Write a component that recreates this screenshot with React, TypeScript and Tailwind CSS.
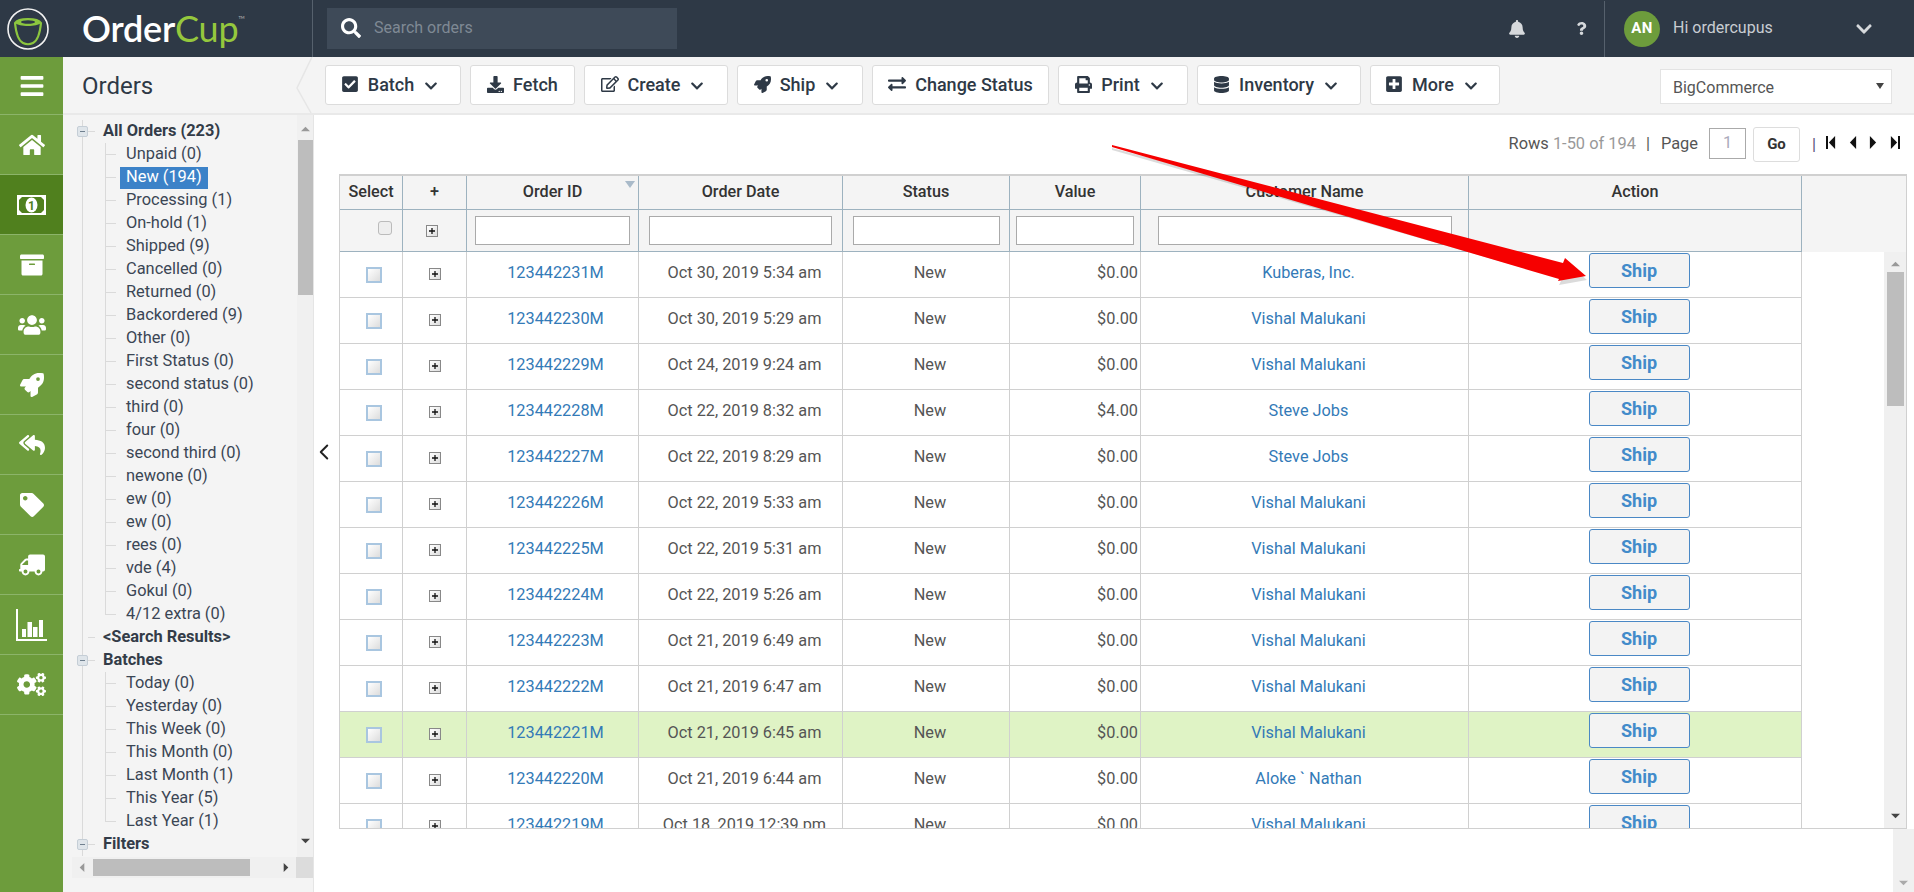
import type { ReactNode } from 'react'
import {
  FaBars, FaHome, FaArchive, FaUsers, FaRocket, FaReplyAll, FaTag, FaTruck, FaCogs,
  FaCheckSquare, FaDownload, FaRegEdit, FaExchangeAlt, FaPrint, FaDatabase, FaPlusSquare, FaBell, FaQuestion,
  FaChevronDown, FaSearch,
} from 'react-icons/fa'
import { ChevronLeft } from 'lucide-react'

function MoneyIcon() {
  return (
    <svg viewBox="0 0 29 20" className="h-[20px] w-[29px]">
      <rect width="29" height="20" fill="#fff" />
      <path d="M5 2H24L27 5V15L24 18H5L2 15V5Z" fill="#50801e" />
      <ellipse cx="14.500" cy="10" rx="6" ry="7.500" fill="#fff" />
      <text x="14.500" y="14.500" textAnchor="middle" fontSize="12" fontWeight="700" fill="#50801e" fontFamily="Roboto, sans-serif">1</text>
    </svg>
  )
}

function ChartIcon() {
  return (
    <svg viewBox="0 0 31 32" className="h-[32px] w-[31px]">
      <path d="M1 0H2V30H31V32H0V0Z" fill="#fff" />
      <rect x="6" y="20" width="4" height="8" fill="#fff" />
      <rect x="11.500" y="13" width="4.500" height="15" fill="#fff" />
      <rect x="17" y="18" width="4.500" height="10" fill="#fff" />
      <rect x="23" y="11" width="4" height="17" fill="#fff" />
    </svg>
  )
}

const railItems = [
  { icon: <FaHome size={26} /> },
  { icon: <MoneyIcon />, active: true },
  { icon: <FaArchive size={24} /> },
  { icon: <FaUsers size={28} /> },
  { icon: <FaRocket size={24} /> },
  { icon: <FaReplyAll size={26} /> },
  { icon: <FaTag size={24} /> },
  { icon: <FaTruck size={26} className="-scale-x-100" /> },
  { icon: <ChartIcon /> },
  { icon: <FaCogs size={29} /> },
]

const toolbar = [
  { label: 'Batch', icon: <FaCheckSquare size={18} />, w: 'w-[136px]', caret: true },
  { label: 'Fetch', icon: <FaDownload size={17} />, w: 'w-[105px]' },
  { label: 'Create', icon: <FaRegEdit size={18} />, w: 'w-[144px]', caret: true },
  { label: 'Ship', icon: <FaRocket size={17} />, w: 'w-[126px]', caret: true },
  { label: 'Change Status', icon: <FaExchangeAlt size={18} />, w: 'w-[177px]' },
  { label: 'Print', icon: <FaPrint size={17} />, w: 'w-[130px]', caret: true },
  { label: 'Inventory', icon: <FaDatabase size={17} />, w: 'w-[164px]', caret: true },
  { label: 'More', icon: <FaPlusSquare size={18} />, w: 'w-[130px]', caret: true },
]

type TreeRow = { label: string; kind: 'parent' | 'child' | 'plain'; selected?: boolean; last?: boolean }

const child = (label: string, extra: Partial<TreeRow> = {}): TreeRow => ({ label, kind: 'child', ...extra })

const tree: TreeRow[] = [
  { label: 'All Orders (223)', kind: 'parent' },
  child('Unpaid (0)'),
  child('New (194)', { selected: true }),
  child('Processing (1)'),
  child('On-hold (1)'),
  child('Shipped (9)'),
  child('Cancelled (0)'),
  child('Returned (0)'),
  child('Backordered (9)'),
  child('Other (0)'),
  child('First Status (0)'),
  child('second status (0)'),
  child('third (0)'),
  child('four (0)'),
  child('second third (0)'),
  child('newone (0)'),
  child('ew (0)'),
  child('ew (0)'),
  child('rees (0)'),
  child('vde (4)'),
  child('Gokul (0)'),
  child('4/12 extra (0)', { last: true }),
  { label: '<Search Results>', kind: 'plain' },
  { label: 'Batches', kind: 'parent' },
  child('Today (0)'),
  child('Yesterday (0)'),
  child('This Week (0)'),
  child('This Month (0)'),
  child('Last Month (1)'),
  child('This Year (5)'),
  child('Last Year (1)', { last: true }),
  { label: 'Filters', kind: 'parent' },
]

const orders = [
  ['123442231M', 'Oct 30, 2019 5:34 am', '$0.00', 'Kuberas, Inc.'],
  ['123442230M', 'Oct 30, 2019 5:29 am', '$0.00', 'Vishal Malukani'],
  ['123442229M', 'Oct 24, 2019 9:24 am', '$0.00', 'Vishal Malukani'],
  ['123442228M', 'Oct 22, 2019 8:32 am', '$4.00', 'Steve Jobs'],
  ['123442227M', 'Oct 22, 2019 8:29 am', '$0.00', 'Steve Jobs'],
  ['123442226M', 'Oct 22, 2019 5:33 am', '$0.00', 'Vishal Malukani'],
  ['123442225M', 'Oct 22, 2019 5:31 am', '$0.00', 'Vishal Malukani'],
  ['123442224M', 'Oct 22, 2019 5:26 am', '$0.00', 'Vishal Malukani'],
  ['123442223M', 'Oct 21, 2019 6:49 am', '$0.00', 'Vishal Malukani'],
  ['123442222M', 'Oct 21, 2019 6:47 am', '$0.00', 'Vishal Malukani'],
  ['123442221M', 'Oct 21, 2019 6:45 am', '$0.00', 'Vishal Malukani'],
  ['123442220M', 'Oct 21, 2019 6:44 am', '$0.00', 'Aloke ` Nathan'],
  ['123442219M', 'Oct 18, 2019 12:39 pm', '$0.00', 'Vishal Malukani'],
]

function Triangle({ dir, className }: { dir: 'up' | 'down' | 'left' | 'right'; className: string }) {
  const points = { up: '0,8 6,1 12,8', down: '0,1 12,1 6,8', left: '8,0 8,12 1,6', right: '1,0 1,12 8,6' }[dir]
  return (
    <svg viewBox={dir === 'up' || dir === 'down' ? '0 0 12 9' : '0 0 9 12'} preserveAspectRatio="none" className={className}>
      <polygon points={points} fill="currentColor" />
    </svg>
  )
}

function Logo() {
  return (
    <div className="flex w-[313px] shrink-0 items-center border-r border-[#56616d] h-full">
      <svg viewBox="0 0 42 42" className="ml-[7px] h-[42px] w-[42px]">
        <circle cx="21" cy="21" r="20" fill="none" stroke="#f2f2f2" strokeWidth="1.6" />
        <path d="M8 15 C10 12 14 11 21 11 C28 11 32 12 34 15 C33 25 30 33 26 35 C23 36.500 19 36.500 16 35 C12 33 9 25 8 15 Z" fill="none" stroke="#8cc63f" strokeWidth="2.2" />
        <path d="M8 15 C12 19 30 19 34 15 C32 12 27 11 21 11 C15 11 10 12 8 15 Z" fill="#8cc63f" />
        <ellipse cx="21" cy="14" rx="7" ry="1.800" fill="#2e3946" />
      </svg>
      <div className="ml-[33px] flex font-['Lato',sans-serif] text-[36px] font-semibold leading-none tracking-[-0.2px] mt-[-2px]">
        <span className="text-white">Order</span>
        <span className="font-normal text-[#95c83d]">Cup</span>
        <span className="mt-[6px] text-[4px] text-[#aaa]">TM</span>
      </div>
    </div>
  )
}

function Header() {
  return (
    <div className="flex h-[57px] shrink-0 items-center bg-[#2e3946]">
      <Logo />
      <div className="ml-[14px] flex h-[41px] w-[350px] items-center bg-[#3e4a58] pb-[2px] pl-[14px] text-[16px] text-[#7f8994]">
        <FaSearch size={20} className="text-white" />
        <span className="ml-[13px]">Search orders</span>
      </div>
      <FaBell size={18} className="ml-auto text-[#d6d9dc]" />
      <FaQuestion size={13} className="ml-[49px] text-[#d6d9dc]" />
      <div className="ml-[16px] flex h-[56px] w-[310px] items-center border-l border-[#56616d] pl-[19px]">
        <div className="flex h-[36px] w-[36px] items-center justify-center rounded-full bg-[#6d9c3c] text-[15px] font-bold tracking-[0.5px] text-white">AN</div>
        <span className="ml-[13px] pb-[1px] text-[16px] text-[#c9cdd2]">Hi ordercupus</span>
        <FaChevronDown size={18} className="ml-[82px] text-[#d6d9dc]" />
      </div>
    </div>
  )
}

function Rail() {
  return (
    <div className="flex w-[63px] shrink-0 flex-col bg-[#6d9c3c] text-white">
      <div className="flex h-[58px] items-center justify-center border-b border-[#8cb46a]">
        <FaBars size={26} />
      </div>
      {railItems.map((item, i) => (
        <div key={i} className={`flex h-[60px] items-center justify-center border-b border-[#8cb46a] ${item.active ? 'bg-[#50801e]' : ''}`}>
          {item.icon}
        </div>
      ))}
    </div>
  )
}

function Toolbar() {
  return (
    <div className="flex h-[58px] shrink-0 border-b-2 border-[#e9e9e9] bg-[#f4f4f4]">
      <div className="relative flex w-[250px] items-center pl-[19px] pt-[2px] text-[24px] text-[#2e3946]">
        Orders
        <svg viewBox="0 0 17 57" className="absolute right-0 top-0 h-[57px] w-[17px]">
          <path d="M16 0 L1 31 L15 56" fill="none" stroke="#e6e6e6" strokeWidth="1.500" />
        </svg>
      </div>
      <div className="ml-[12px] flex gap-[9px] pt-[8px]">
        {toolbar.map(b => (
          <div key={b.label} className={`flex h-[40px] items-center justify-center gap-[9px] rounded-[3px] border border-[#dcdcdc] bg-white pb-[2px] text-[18px] font-medium text-[#2e3946] ${b.caret ? 'pr-[7px]' : ''} ${b.w}`}>
            {b.icon}
            <span>{b.label}</span>
            {b.caret && <FaChevronDown size={14} className="ml-[1px] mt-[3px]" />}
          </div>
        ))}
      </div>
      <div className="ml-[160px] mt-[12px] flex h-[35px] w-[232px] items-center justify-between border border-[#e3e3e3] bg-white pl-[12px] pr-[7px] pt-[2px] text-[16px] text-[#555]">
        BigCommerce
        <Triangle dir="down" className="mb-[4px] h-[8px] w-[8px] text-[#444]" />
      </div>
    </div>
  )
}

function TreeLine({ row }: { row: TreeRow }) {
  return (
    <div className="flex h-[23px] items-center whitespace-nowrap text-[16.400px] text-[#3b4654]">
      <div className={`relative ml-[19px] h-full shrink-0 border-l border-[#dadada] ${row.kind === 'child' ? 'w-[23px]' : 'w-[21px]'}`}>
        {row.kind === 'parent' && <div className="absolute left-[-6px] top-[6px] flex h-[11px] w-[11px] items-center justify-center rounded-[2px] border border-[#c5ced6] bg-[#dfe5ea]"><div className="h-px w-[5px] bg-[#70808f]" /></div>}
        {row.kind !== 'child' && <div className="absolute left-[5px] top-[11px] h-px w-[7px] bg-[#dadada]" />}
      </div>
      {row.kind === 'child' ? (
        <>
          <div className="relative h-full w-[15px] shrink-0">
            <div className={`absolute left-0 top-0 w-px bg-[#dadada] ${row.last ? 'h-[12px]' : 'h-full'}`} />
            <div className="absolute left-0 top-[11px] h-px w-[11px] bg-[#dadada]" />
          </div>
          <span className={`flex h-[22px] items-center px-[6px] ${row.selected ? 'bg-[#3c82c8] text-white' : ''}`}>{row.label}</span>
        </>
      ) : (
        <span className="font-bold text-[#333c48]">{row.label}</span>
      )}
    </div>
  )
}

function TreePanel() {
  return (
    <div className="flex w-[251px] shrink-0 flex-col border-r border-[#e5e5e5] bg-[#f4f4f4]">
      <div className="flex h-[742px] overflow-hidden">
        <div className="h-full w-[234px] overflow-hidden pt-[5px]">
          {tree.map((row, i) => <TreeLine key={i} row={row} />)}
        </div>
        <div className="flex w-[16px] shrink-0 flex-col items-center bg-[#f0f0f0] pt-[11px] text-[#999]">
          <Triangle dir="up" className="h-[6px] w-[9px]" />
          <div className="mt-[8px] h-[155px] w-[15px] bg-[#bdbdbd]" />
          <Triangle dir="down" className="mt-[543px] h-[6px] w-[9px] text-[#444]" />
        </div>
      </div>
      <div className="flex h-[21px]">
        <div className="ml-[9px] flex w-[224px] items-center bg-[#f0f0f0] text-[#999]">
          <Triangle dir="left" className="ml-[7px] h-[9px] w-[6px]" />
          <div className="ml-[8px] h-[17px] w-[157px] bg-[#bdbdbd]" />
          <Triangle dir="right" className="ml-[33px] h-[9px] w-[6px] text-[#444]" />
        </div>
        <div className="w-[17px] bg-[#dcdcdc]" />
      </div>
    </div>
  )
}

const cols = ['w-[63px]', 'w-[64px]', 'w-[172px]', 'w-[204px]', 'w-[167px]', 'w-[131px]', 'w-[328px]', 'w-[333px]']

function HeadCell({ i, children }: { i: number; children?: ReactNode }) {
  return <div className={`relative flex h-full shrink-0 items-center justify-center border-r border-[#9db2bf] ${cols[i]}`}>{children}</div>
}

function ExpandBox({ className = '' }: { className?: string }) {
  return (
    <div className={`flex h-[12px] w-[12px] items-center justify-center border border-[#888] bg-gradient-to-br from-white to-[#ddd] text-[#111] ${className}`}>
      <svg viewBox="0 0 8 8" className="h-[8px] w-[8px]"><path d="M4 1v6M1 4h6" stroke="currentColor" strokeWidth="1.300" /></svg>
    </div>
  )
}

function FilterInput({ w }: { w: string }) {
  return <input className={`h-[29px] border border-[#aaa] bg-white ${w}`} />
}

function OrderRow({ o, green }: { o: string[]; green: boolean }) {
  const cell = 'flex h-full shrink-0 items-center justify-center border-r border-[#d0d0d0]'
  return (
    <div className={`flex h-[46px] w-[1462px] shrink-0 border-b border-[#d0d0d0] text-[16.300px] text-[#555] ${green ? 'bg-[#dff3c5]' : ''}`}>
      <div className={`${cell} ${cols[0]}`}>
        <div className="mt-[1px] ml-[6px] h-[16px] w-[16px] border-2 border-[#a9c6e0] bg-gradient-to-br from-white to-[#ddd]" />
      </div>
      <div className={`${cell} ${cols[1]}`}><ExpandBox className="mb-[1px] ml-[1px]" /></div>
      <div className={`${cell} ${cols[2]} pb-[3px] pl-[6px] text-[#337ab7]`}>{o[0]}</div>
      <div className={`${cell} ${cols[3]} pb-[3px] pl-[8px]`}>{o[1]}</div>
      <div className={`${cell} ${cols[4]} pb-[3px] pl-[8px]`}>New</div>
      <div className={`${cell} ${cols[5]} justify-end pb-[3px] pr-[2px]`}>{o[2]}</div>
      <div className={`${cell} ${cols[6]} pb-[3px] pl-[8px] text-[#337ab7]`}>{o[3]}</div>
      <div className={`${cols[7]} flex h-full shrink-0 justify-center border-r border-[#d0d0d0] pl-[8px] pt-px`}>
        <div className="flex h-[35px] w-[101px] items-center justify-center rounded-[3px] border border-[#4a88c5] bg-[#f3f3f3] text-[18px] font-bold text-[#428bca]">Ship</div>
      </div>
    </div>
  )
}

function OrdersTable() {
  return (
    <div className="flex h-[655px] w-[1568px] flex-col overflow-hidden border border-t-2 border-[#d0d0d0]">
      <div className="flex shrink-0 flex-col bg-[#f4f4f4] text-[16.200px] font-medium text-[#333]">
        <div className="flex h-[34px] w-[1462px] border-b border-[#9db2bf]">
          <HeadCell i={0}>Select</HeadCell>
          <HeadCell i={1}>+</HeadCell>
          <HeadCell i={2}>
            Order ID
            <Triangle dir="down" className="absolute right-[3px] top-[4px] h-[9px] w-[10px] text-[#a9bac9]" />
          </HeadCell>
          <HeadCell i={3}>Order Date</HeadCell>
          <HeadCell i={4}>Status</HeadCell>
          <HeadCell i={5}>Value</HeadCell>
          <HeadCell i={6}>Customer Name</HeadCell>
          <HeadCell i={7}>Action</HeadCell>
        </div>
        <div className="flex h-[42px] w-[1462px] border-b border-[#9db2bf]">
          <HeadCell i={0}><div className="mb-[6px] ml-[27px] h-[14px] w-[14px] rounded-[3px] border border-[#bbb] bg-[#eee]" /></HeadCell>
          <HeadCell i={1}><ExpandBox className="ml-[-5px] mt-[1px]" /></HeadCell>
          <HeadCell i={2}><FilterInput w="w-[155px]" /></HeadCell>
          <HeadCell i={3}><FilterInput w="w-[183px]" /></HeadCell>
          <HeadCell i={4}><FilterInput w="w-[147px]" /></HeadCell>
          <HeadCell i={5}><FilterInput w="w-[118px]" /></HeadCell>
          <HeadCell i={6}><FilterInput w="w-[294px]" /></HeadCell>
          <HeadCell i={7} />
        </div>
      </div>
      <div className="flex min-h-0 flex-1">
        <div className="flex min-w-0 flex-1 flex-col overflow-hidden">
          {orders.map((o, i) => <OrderRow key={o[0]} o={o} green={i === 10} />)}
        </div>
        <div className="flex w-[22px] shrink-0 flex-col items-center bg-[#f0f0f0] pt-[9px] text-[#999]">
          <Triangle dir="up" className="h-[6px] w-[9px]" />
          <div className="mt-[5px] h-[134px] w-[17px] bg-[#bdbdbd]" />
          <Triangle dir="down" className="mt-[407px] h-[6px] w-[9px] text-[#444]" />
        </div>
      </div>
    </div>
  )
}

function Pager() {
  return (
    <div className="flex h-[59px] w-[1568px] items-start justify-end pt-[12px] text-[16.400px] text-[#555]">
      <div className="mt-[5px]">Rows <span className="text-[#999]">1-50 of 194</span></div>
      <div className="ml-[10px] mt-[5px]">|</div>
      <div className="ml-[11px] mt-[5px]">Page</div>
      <div className="ml-[11px] mt-px flex h-[31px] w-[37px] items-center justify-center border border-[#aaa] text-[#aab]">1</div>
      <div className="ml-[7px] flex h-[35px] w-[47px] items-center justify-center rounded-[3px] border border-[#ddd] text-[15px] font-bold text-[#333]">Go</div>
      <div className="ml-[12px] mt-[6px] text-[#5a4a7a]">|</div>
      <div className="ml-[10px] mr-[7px] mt-[9px] flex items-center text-[#111]">
        <div className="h-[13px] w-[2px] bg-current" />
        <Triangle dir="left" className="h-[13px] w-[8px]" />
        <Triangle dir="left" className="ml-[13px] h-[13px] w-[8px]" />
        <Triangle dir="right" className="ml-[12px] h-[13px] w-[8px]" />
        <Triangle dir="right" className="ml-[13px] h-[13px] w-[8px]" />
        <div className="h-[13px] w-[2px] bg-current" />
      </div>
    </div>
  )
}

function Arrow() {
  return (
    <svg viewBox="0 0 1914 892" className="pointer-events-none absolute inset-0 h-[892px] w-[1914px]">
      <polygon points="1112,148 1563,267 1566,262 1587,280 1559,285 1562,279 1112,150" fill="#000" opacity="0.14" />
      <polygon points="1112,145 1563,263 1565,258 1586,276 1558,281 1559,279 1112,147" fill="#f60000" />
    </svg>
  )
}

export default function App() {
  return (
    <div className="relative flex h-[892px] w-[1914px] flex-col overflow-hidden bg-white font-['Roboto',sans-serif]">
      <Header />
      <div className="flex min-h-0 flex-1">
        <Rail />
        <div className="flex min-w-0 flex-1 flex-col">
          <Toolbar />
          <div className="flex min-h-0 flex-1">
            <TreePanel />
            <div className="w-[25px] shrink-0 pt-[324px] text-[#222]">
              <ChevronLeft size={26} strokeWidth={1.8} className="ml-[-3px]" />
            </div>
            <div className="flex w-[1575px] flex-col">
              <Pager />
              <OrdersTable />
              <div className="flex justify-end">
                <div className="flex h-[63px] w-[21px] items-end justify-center bg-[#f0f0f0] pb-[6px] text-[#aaa]">
                  <Triangle dir="down" className="h-[6px] w-[9px]" />
                </div>
              </div>
            </div>
          </div>
        </div>
      </div>
      <Arrow />
    </div>
  )
}
